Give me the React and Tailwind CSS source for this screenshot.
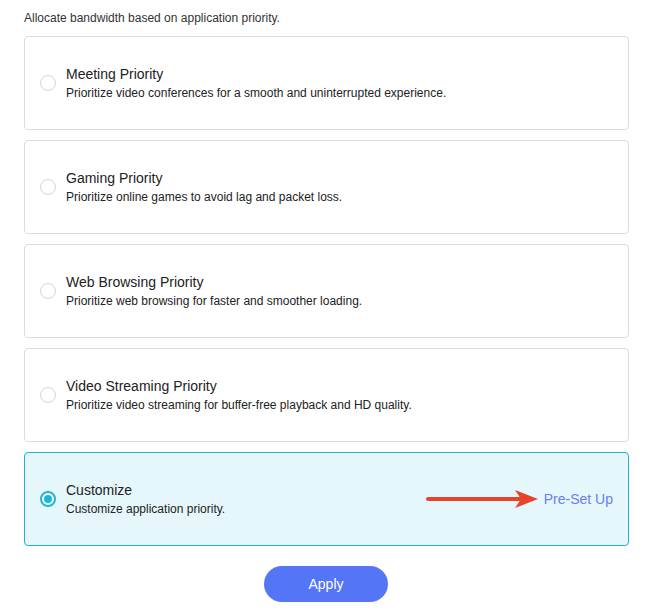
import React, { useState } from "react";

const options = [
  { title: "Meeting Priority", desc: "Prioritize video conferences for a smooth and uninterrupted experience." },
  { title: "Gaming Priority", desc: "Prioritize online games to avoid lag and packet loss." },
  { title: "Web Browsing Priority", desc: "Prioritize web browsing for faster and smoother loading." },
  { title: "Video Streaming Priority", desc: "Prioritize video streaming for buffer-free playback and HD quality." },
  { title: "Customize", desc: "Customize application priority.", custom: true },
];

export default function App() {
  const [sel, setSel] = useState(4);
  return (
    <div className="w-[653px] h-[614px] bg-white px-6 pt-[10px]" style={{ fontFamily: '"Liberation Sans", Arial, sans-serif' }}>
      <div className="text-[12px] leading-[16px] text-[#333]">Allocate bandwidth based on application priority.</div>
      <div className="mt-[10px] flex flex-col gap-[10px]">
        {options.map((o, i) => {
          const active = sel === i;
          return (
            <div
              key={i}
              onClick={() => setSel(i)}
              className={`h-[94px] rounded-[4px] border flex items-center pl-[15px] pr-[15px] ${active ? "border-[#1db3d3] bg-[#e5f7fb]" : "border-[#dcdcdc] bg-white"}`}
            >
              <div className={`w-[16px] h-[16px] rounded-full flex items-center justify-center shrink-0 ${active ? "border-2 border-[#1cb6d8] bg-white" : "border border-[#d4d4d4] bg-white"}`}>
                {active && <div className="w-[8px] h-[8px] rounded-full bg-[#1cb6d8]" />}
              </div>
              <div className="ml-[10px] flex-1 pb-[1px]">
                <div className="text-[14px] leading-[18px] text-[#222]">{o.title}</div>
                <div className="text-[12px] leading-[16px] text-[#222] mt-[2px]">{o.desc}</div>
              </div>
              {o.custom && (
                <div className="flex items-center">
                  <svg width="114" height="20" viewBox="0 0 114 20" className="mr-[5px]">
                    <line x1="3" y1="10" x2="95" y2="10" stroke="#e8432b" strokeWidth="4" strokeLinecap="round" />
                    <polygon points="90,1 113,10 90,19 96,10" fill="#e8432b" />
                  </svg>
                  <span className="text-[14px] text-[#6a7df5]">Pre-Set Up</span>
                </div>
              )}
            </div>
          );
        })}
      </div>
      <div className="flex justify-center mt-[20px] pr-px">
        <button className="w-[124px] h-[36px] rounded-full bg-[#5476f6] text-white text-[14px]">Apply</button>
      </div>
    </div>
  );
}
